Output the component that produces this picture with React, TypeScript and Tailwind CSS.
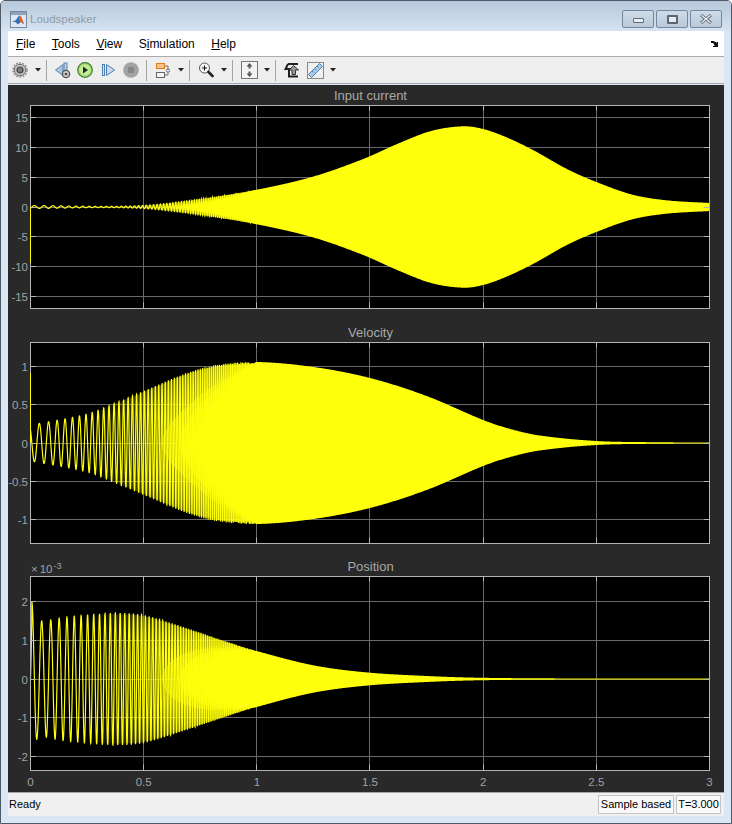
const sans = "font-['Liberation_Sans',Arial,sans-serif]";

type Knot = [number, number];

const F0 = 22;
const K = 2;
const T0 = 0.006;
const theta = (t: number) => 2 * Math.PI * (F0 / K) * (Math.exp(K * (t - T0)) - 1);

function interp(table: Knot[], t: number) {
    let i = 0;
    while (i < table.length - 2 && table[i + 1][0] < t) i++;
    const [x0, y0] = table[i];
    const [x1, y1] = table[i + 1];
    const prev = table[Math.max(i - 1, 0)];
    const next = table[Math.min(i + 2, table.length - 1)];
    const h = x1 - x0;
    const m0 = ((y1 - prev[1]) / (x1 - prev[0])) * h;
    const m1 = ((next[1] - y0) / (next[0] - x0)) * h;
    const u = (t - x0) / h;
    const u2 = u * u;
    const u3 = u2 * u;
    return (2 * u3 - 3 * u2 + 1) * y0 + (u3 - 2 * u2 + u) * m0 + (-2 * u3 + 3 * u2) * y1 + (u3 - u2) * m1;
}

const currentEnv: Knot[] = [
    [0, 1.5], [0.1, 1.3], [0.2, 0.9], [0.3, 0.6], [0.4, 0.8], [0.5, 1.6], [0.6, 3.6], [0.75, 8], [1, 17.3],
    [1.25, 30.5], [1.47, 48], [1.62, 63], [1.77, 76], [1.91, 80.7], [2, 78], [2.1, 70], [2.22, 57], [2.37, 38],
    [2.5, 25], [2.66, 12.3], [2.81, 6.7], [3, 4],
];
const velocityEnv: Knot[] = [
    [0, 18], [0.25, 29], [0.375, 40], [0.5, 52], [0.69, 70], [0.82, 78], [1, 81], [1.25, 76], [1.5, 65],
    [1.75, 47], [2, 23], [2.12, 14], [2.25, 7.5], [2.5, 2], [2.75, 0.8], [3, 0.5],
];
const positionEnv: Knot[] = [
    [0, 60], [0.06, 58], [0.13, 61], [0.25, 64], [0.375, 66], [0.5, 64], [0.69, 51], [0.82, 41], [1, 28],
    [1.25, 13.7], [1.48, 6.7], [1.75, 3], [2, 1.2], [2.5, 0.5], [3, 0.5],
];

const xOf = (t: number) => 22.5 + t * 226.33;

function chirpPath(table: Knot[], center: number, wave: (t: number) => number) {
    let d = "";
    for (let n = 0; n <= 2000; n++) {
        const t = n / 2000;
        const y = center - interp(table, t) * wave(t);
        d += `${n ? "L" : "M"}${xOf(t).toFixed(2)} ${y.toFixed(2)}`;
    }
    return d;
}

// band around the zero line from t0 to t1; scale shrinks the envelope near t0
function bandPath(table: Knot[], center: number, t0: number, t1: number, scale: (t: number) => number) {
    const upper: string[] = [];
    const lower: string[] = [];
    const steps = Math.ceil((t1 - t0) * 300);
    for (let n = 0; n <= steps; n++) {
        const t = t0 + (n / steps) * (t1 - t0);
        const a = Math.max(interp(table, t) * scale(t), t >= 1 ? 0.5 : 0);
        upper.push(`${xOf(t).toFixed(2)} ${(center - a).toFixed(2)}`);
        lower.unshift(`${xOf(t).toFixed(2)} ${(center + a).toFixed(2)}`);
    }
    return `M${upper.join("L")}L${lower.join("L")}Z`;
}

const lens = (start: number) => (t: number) => Math.sqrt(Math.max(t - start, 0) / (1 - start));

const X_TICKS = ["0", "0.5", "1", "1.5", "2", "2.5", "3"];

type PlotProps = {
    id: string;
    title: string;
    height: number;
    titleY: number;
    boxTop: number;
    boxBottom: number;
    center: number;
    ticks: [string, number][];
    table: Knot[];
    wave: (t: number) => number;
    spike?: number;
    children?: React.ReactNode;
};

function Plot({ id, title, height, titleY, boxTop, boxBottom, center, ticks, table, wave, spike, children }: PlotProps) {
    const xLines = X_TICKS.map((_, i) => Math.round(xOf(i / 2) - 0.5) + 0.5);
    return (
        <svg width="716" height={height} className="block shrink-0">
            <defs>
                <linearGradient id={id} gradientUnits="userSpaceOnUse" x1={xOf(0.25)} x2={xOf(1)} y1="0" y2="0">
                    <stop offset="0" stopColor="#ffff0c" stopOpacity="0" />
                    <stop offset="0.4" stopColor="#ffff0c" stopOpacity="0.3" />
                    <stop offset="0.75" stopColor="#ffff0c" stopOpacity="0.55" />
                    <stop offset="1" stopColor="#ffff0c" stopOpacity="0.75" />
                </linearGradient>
            </defs>
            <rect x="22.5" y={boxTop} width="679" height={boxBottom - boxTop} fill="#000" />
            {ticks.map(([, y]) => (
                <line key={y} x1="22.5" x2="701.5" y1={y} y2={y} stroke="#6a6a6a" />
            ))}
            {xLines.map((x) => (
                <line key={x} x1={x} x2={x} y1={boxTop} y2={boxBottom} stroke="#6a6a6a" />
            ))}
            <path d={bandPath(table, center, 0.25, 1, () => 0.98)} fill={`url(#${id})`} />
            <path d={bandPath(table, center, 0.58, 1, lens(0.58))} fill="#ffff0c" fillOpacity="0.45" />
            <path d={bandPath(table, center, 0.66, 1, lens(0.66))} fill="#ffff0c" fillOpacity="0.6" />
            <path d={bandPath(table, center, 0.74, 1, lens(0.74))} fill="#ffff0c" />
            <path d={chirpPath(table, center, wave)} fill="none" stroke="#ffff0c" strokeWidth="1.2" />
            <path d={bandPath(table, center, 1, 3, () => 1)} fill="#ffff0c" />
            <rect x="22.5" y={boxTop} width="679" height={boxBottom - boxTop} fill="none" stroke="#b4b4b4" />
            {spike ? <line x1="22.5" x2="22.5" y1={center} y2={center + spike} stroke="#ffff0c" /> : null}
            {ticks.map(([, y]) => (
                <path key={y} d={`M23 ${y}h5M696 ${y}h5`} stroke="#b4b4b4" />
            ))}
            {xLines.map((x) => (
                <path key={x} d={`M${x} ${boxTop}v5M${x} ${boxBottom}v-6`} stroke="#b4b4b4" />
            ))}
            <g fontFamily="'Liberation Sans', Arial, sans-serif" fill="#a2a2a2">
                <text x="362.5" y={titleY} textAnchor="middle" fontSize="13" fill="#a8a8a8">
                    {title}
                </text>
                {ticks.map(([label, y]) => (
                    <text key={label} x="20" y={y + 4.5} textAnchor="end" fontSize="11.5">
                        {label}
                    </text>
                ))}
                {children}
            </g>
        </svg>
    );
}

function Caret() {
    return (
        <svg width="6" height="4" className="shrink-0">
            <path d="M0 0h6L3 3.5z" fill="#222" />
        </svg>
    );
}

function Sep() {
    return <div className="w-px h-[21px] bg-[#a5a5a5] shrink-0" />;
}

function GearIcon() {
    return (
        <svg width="16" height="16" viewBox="0 0 16 16" className="shrink-0">
            <circle cx="8" cy="8" r="7" fill="none" stroke="#8a8a8a" strokeWidth="1.4" strokeDasharray="2 1.2" />
            <circle cx="8" cy="8" r="5.6" fill="#cdcdcd" stroke="#6a6a6a" />
            <circle cx="8" cy="8" r="3" fill="#7c7c7c" stroke="#3f3f3f" strokeWidth="1.2" />
        </svg>
    );
}

function BackIcon() {
    return (
        <svg width="16" height="17" viewBox="0 0 16 17" className="shrink-0">
            <path d="M0.500 8l7.500-5.500v11z" fill="#a9c6e6" stroke="#5f85ad" />
            <rect x="9" y="1" width="3" height="8" fill="#b7cfe9" stroke="#5f85ad" />
            <circle cx="11" cy="12" r="3.6" fill="#cfcfcf" stroke="#555" strokeWidth="1.4" />
            <circle cx="11" cy="12" r="1.3" fill="#444" />
        </svg>
    );
}

function PlayIcon() {
    return (
        <svg width="16" height="16" viewBox="0 0 16 16" className="shrink-0">
            <circle cx="8" cy="8" r="7.3" fill="#a6dc74" stroke="#3f7d2c" strokeWidth="1.2" />
            <circle cx="8" cy="8" r="5.4" fill="#c4eb9c" />
            <path d="M6 4.500l5 3.500-5 3.500z" fill="#1f2f16" />
        </svg>
    );
}

function StepIcon() {
    return (
        <svg width="16" height="16" viewBox="0 0 16 16" className="shrink-0">
            <rect x="2.5" y="2.5" width="2" height="11" fill="#d7e6f5" stroke="#4d7eb0" />
            <path d="M6.500 2.500l8 5.500-8 5.500z" fill="#c6dcf2" stroke="#4d7eb0" />
        </svg>
    );
}

function StopIcon() {
    return (
        <svg width="16" height="16" viewBox="0 0 16 16" className="shrink-0">
            <circle cx="8" cy="8" r="7.8" fill="#a3a3a3" />
            <rect x="5" y="5" width="6" height="6" fill="#868686" />
        </svg>
    );
}

function BlockIcon() {
    return (
        <svg width="16" height="17" viewBox="0 0 16 17" className="shrink-0">
            <path d="M9.500 4h3.500v9H9.500" fill="none" stroke="#777" />
            <rect x="1.5" y="1.5" width="8" height="5" fill="#f6c28f" stroke="#e07b1a" />
            <rect x="1.5" y="10.5" width="8" height="5" fill="#f4f4f4" stroke="#666" />
            <circle cx="13" cy="8.5" r="1.6" fill="#fff" stroke="#666" />
        </svg>
    );
}

function ZoomIcon() {
    return (
        <svg width="16" height="16" viewBox="0 0 16 16" className="shrink-0">
            <circle cx="6.5" cy="6" r="5" fill="#f6f6f6" stroke="#555" />
            <path d="M4 6h5M6.500 3.500v5" stroke="#111" />
            <path d="M10.500 10l4 4" stroke="#222" strokeWidth="2.6" strokeLinecap="round" />
        </svg>
    );
}

function FitIcon() {
    return (
        <svg width="17" height="18" viewBox="0 0 17 18" className="shrink-0">
            <rect x="0.5" y="0.5" width="16" height="17" fill="#f3f3f3" stroke="#777" />
            <path d="M8.500 2l3 3.500h-2v2h-2v-2h-2zM8.500 16l3-3.500h-2v-2h-2v2h-2z" fill="#555" />
        </svg>
    );
}

function HighlightIcon() {
    return (
        <svg width="16" height="17" viewBox="0 0 16 17" className="shrink-0">
            <path d="M4 2h10M4 2L1.500 7H5v7.500h9" fill="none" stroke="#222" strokeWidth="2" />
            <path d="M9.500 3.500l5 4.500h-3v4.500H8V8H5z" fill="#9a9a9a" stroke="#333" />
        </svg>
    );
}

function RulerIcon() {
    return (
        <svg width="17" height="17" viewBox="0 0 17 17" className="shrink-0">
            <rect x="0.5" y="0.5" width="16" height="16" fill="#f0f0f0" stroke="#888" />
            <path d="M1.500 12.500L12.500 1.500l3 3L4.500 15.500z" fill="#a9cdee" stroke="#4b7ea8" />
            <path d="M5 9l1.500 1.500M7.500 6.500L9 8M10 4l1.500 1.500" stroke="#4b7ea8" />
        </svg>
    );
}

function MatlabLogo() {
    return (
        <svg width="17" height="17" viewBox="0 0 17 17">
            <rect x="0.5" y="0.5" width="16" height="16" fill="#dfe8f2" stroke="#7a8798" />
            <rect x="1" y="1" width="15" height="3" fill="#8aa3c0" />
            <path d="M2 11l4-2 3-4.500 2 1 3 7.500-3.500-2-2.500 2.500-2.500-2.500z" fill="#2f6fb8" />
            <path d="M9 4.500l2 1 3 7.500-3.500-2-1.500-3z" fill="#e8651f" />
        </svg>
    );
}

function WinButton({ children }: { children: React.ReactNode }) {
    return (
        <div className="w-[32px] h-[18px] rounded-[2px] border border-[#76869f] bg-gradient-to-b from-[#cfdbe8] to-[#b9c9da] flex items-center justify-center">
            {children}
        </div>
    );
}

function MenuItem({ pre, mark, post }: { pre?: string; mark: string; post: string }) {
    return (
        <span>
            {pre}
            <u>{mark}</u>
            {post}
        </span>
    );
}

export default function App() {
    return (
        <div className={`${sans} w-[732px] h-[824px] bg-[#dae6f3] border border-[#4f5a66] rounded-t-[5px] overflow-hidden flex flex-col`}>
            {/* title bar */}
            <div className="h-[30px] shrink-0 bg-gradient-to-b from-[#b6c8da] to-[#d6e4f2] flex pl-[9px] pr-[9px]">
                <div className="mt-[10px]">
                    <MatlabLogo />
                </div>
                <span className="ml-[3px] mt-[11px] text-[11.5px] leading-[15px] text-[#8f9aa5]">Loudspeaker</span>
                <div className="ml-auto mt-[9px] flex gap-[2px] h-[18px]">
                    <WinButton>
                        <div className="w-[11px] h-[5px] mt-[2px] bg-[#e9eef4] border border-[#5f6a78] rounded-[1px]" />
                    </WinButton>
                    <WinButton>
                        <div className="w-[11px] h-[9px] border-2 border-[#5a6675] bg-[#e5ebf2] rounded-[1px]" />
                    </WinButton>
                    <WinButton>
                        <svg width="12" height="10" viewBox="0 0 12 10">
                            <path d="M1 1l10 8M11 1L1 9" stroke="#5f6a78" strokeWidth="3" />
                            <path d="M1.500 1.200l9 7.600M10.500 1.200l-9 7.600" stroke="#eef2f6" strokeWidth="1.200" />
                        </svg>
                    </WinButton>
                </div>
            </div>

            <div className="flex-1 mx-[7px] flex flex-col min-h-0">
                {/* menu */}
                <div className="h-[26px] shrink-0 bg-white border-b border-[#ababab] flex items-center pl-[8px] pr-[5px] text-[12px] text-black gap-[16.5px]">
                    <MenuItem mark="F" post="ile" />
                    <MenuItem mark="T" post="ools" />
                    <MenuItem mark="V" post="iew" />
                    <MenuItem pre="S" mark="i" post="mulation" />
                    <MenuItem mark="H" post="elp" />
                    <svg width="8" height="6" viewBox="0 0 8 6" className="ml-auto">
                        <path d="M0 0h3l1 1h1l1 1v-1h1v5H2V5h2L3 4V3L2 2H0z" fill="#111" />
                    </svg>
                </div>

                {/* toolbar */}
                <div className="h-[27px] shrink-0 bg-[#eeeeee] border-b border-[#a8a8a8] flex items-center pl-[4px]">
                    <GearIcon />
                    <div className="ml-[7px]"><Caret /></div>
                    <div className="ml-[5px]"><Sep /></div>
                    <div className="ml-[8px]"><BackIcon /></div>
                    <div className="ml-[6px]"><PlayIcon /></div>
                    <div className="ml-[7px]"><StepIcon /></div>
                    <div className="ml-[7px]"><StopIcon /></div>
                    <div className="ml-[7px]"><Sep /></div>
                    <div className="ml-[8px]"><BlockIcon /></div>
                    <div className="ml-[7px]"><Caret /></div>
                    <div className="ml-[5px]"><Sep /></div>
                    <div className="ml-[8px]"><ZoomIcon /></div>
                    <div className="ml-[7px]"><Caret /></div>
                    <div className="ml-[5px]"><Sep /></div>
                    <div className="ml-[8px]"><FitIcon /></div>
                    <div className="ml-[6px]"><Caret /></div>
                    <div className="ml-[5px]"><Sep /></div>
                    <div className="ml-[8px]"><HighlightIcon /></div>
                    <div className="ml-[7px]"><RulerIcon /></div>
                    <div className="ml-[6px]"><Caret /></div>
                </div>

                {/* scope canvas */}
                <div className="mt-px h-[707px] shrink-0 bg-[#292929] flex flex-col overflow-hidden">
                    <Plot
                        id="fade-current"
                        title="Input current"
                        height={241}
                        titleY={15}
                        boxTop={20.5}
                        boxBottom={223.5}
                        center={122}
                        ticks={[["15", 32.5], ["10", 62.5], ["5", 92.5], ["0", 122.5], ["-5", 151.5], ["-10", 181.5], ["-15", 211.5]]}
                        table={currentEnv}
                        wave={(t) => Math.sin(theta(t))}
                        spike={56}
                    />
                    <Plot
                        id="fade-velocity"
                        title="Velocity"
                        height={233}
                        titleY={11}
                        boxTop={16.5}
                        boxBottom={217.5}
                        center={117}
                        ticks={[["1", 40.5], ["0.5", 78.5], ["0", 117.5], ["-0.5", 155.5], ["-1", 193.5]]}
                        table={velocityEnv}
                        wave={(t) => -Math.sin(theta(t))}
                        spike={-70}
                    />
                    <Plot
                        id="fade-position"
                        title="Position"
                        height={233}
                        titleY={12}
                        boxTop={17.5}
                        boxBottom={211.5}
                        center={120}
                        ticks={[["2", 42.5], ["1", 81.5], ["0", 120.5], ["-1", 158.5], ["-2", 197.5]]}
                        table={positionEnv}
                        wave={(t) => Math.cos(theta(t)) * (t < 0.006 ? t / 0.006 : t < 0.03 ? 1 + 0.38 * (1 - t / 0.03) : 1)}
                    >
                        <text x="23" y="14" fontSize="11.5">
                            <tspan>×</tspan>
                            <tspan dx="2">10</tspan>
                            <tspan dx="1" dy="-4" fontSize="9">-3</tspan>
                        </text>
                        {X_TICKS.map((label, i) => (
                            <text key={label} x={xOf(i / 2)} y="227" textAnchor="middle" fontSize="11.5">
                                {label}
                            </text>
                        ))}
                    </Plot>
                </div>

                {/* status bar */}
                <div className="h-[24px] shrink-0 bg-[#f0f0f0] border-t border-[#a8a8a8] flex items-center pl-px pr-[3px] text-[11px] text-black">
                    <span>Ready</span>
                    <div className="ml-auto h-[19px] w-[76px] bg-[#f8f8f8] border border-[#c4c4c4] flex items-center justify-center">
                        Sample based
                    </div>
                    <div className="ml-[2px] h-[19px] w-[45px] bg-[#fafafa] border border-[#c4c4c4] flex items-center justify-center">
                        T=3.000
                    </div>
                </div>
            </div>
            <div className="h-[7px] shrink-0" />
        </div>
    );
}
